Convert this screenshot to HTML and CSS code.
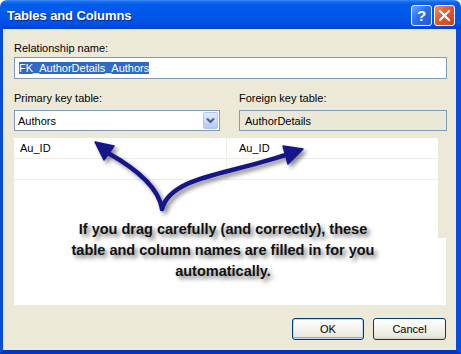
FILE: index.html
```html
<!DOCTYPE html>
<html>
<head>
<meta charset="utf-8">
<link rel="stylesheet" href="styles.css">
</head>
<body>
<div class="window">
  <div class="titlebar">
    <span class="title">Tables and Columns</span>
    <div class="tbtns">
      <span class="tb help">?</span>
      <span class="tb close"><svg width="13" height="13" viewBox="0 0 13 13"><path d="M2 2 L11 11 M11 2 L2 11" stroke="#fff" stroke-width="2.2" stroke-linecap="round"/></svg></span>
    </div>
  </div>
  <div class="frame">
    <div class="lbl">Relationship name:</div>
    <div class="textbox"><span class="sel">FK_AuthorDetails_Authors</span></div>
    <div class="keys">
      <div class="col">
        <div class="lbl">Primary key table:</div>
        <div class="combo"><span class="ctext">Authors</span><span class="dd"><svg width="9" height="7" viewBox="0 0 9 7"><path d="M1 1.5 L4.5 5 L8 1.5" fill="none" stroke="#4D6185" stroke-width="2"/></svg></span></div>
      </div>
      <div class="col">
        <div class="lbl">Foreign key table:</div>
        <div class="ro">AuthorDetails</div>
      </div>
    </div>
    <div class="gridarea">
      <div class="grid">
        <div class="row"><div class="cell c1">Au_ID</div><div class="cell c2">Au_ID</div></div>
        <div class="row"><div class="cell c1"></div><div class="cell c2"></div></div>
      </div>
      <div class="note"></div>
      <svg class="arrows" width="432" height="167" viewBox="14 138 432 167">
        <defs>
          <filter id="sh" x="-20%" y="-20%" width="140%" height="140%">
            <feDropShadow dx="3" dy="3" stdDeviation="2" flood-color="#000" flood-opacity="0.45"/>
          </filter>
        </defs>
        <g filter="url(#sh)" fill="#17178a" stroke="#17178a">
          <path d="M162 209 C159 190 142 172 108 153" fill="none" stroke-width="4.5" stroke-linecap="round"/>
          <path d="M162 209 C168 186 200 178 232 170 S272 159 286 155" fill="none" stroke-width="4.5" stroke-linecap="round"/>
          <polygon points="95,142 114,146 104,160" stroke-width="1.5" stroke-linejoin="round"/>
          <polygon points="303,149 283,146 288,164" stroke-width="1.5" stroke-linejoin="round"/>
        </g>
      </svg>
      <div class="annot">If you drag carefully (and correctly), these<br>table and column names are filled in for you<br>automatically.</div>
    </div>
    <div class="buttons">
      <button class="btn ok">OK</button>
      <button class="btn cancel">Cancel</button>
    </div>
  </div>
</div>
</body>
</html>
```

FILE: styles.css
```css
html, body {
  margin: 0;
  padding: 0;
  width: 461px;
  height: 354px;
  overflow: hidden;
  background: #ffffff;
}

.window {
  width: 461px;
  height: 354px;
  display: flex;
  flex-direction: column;
  font-family: "Liberation Sans", Arial, sans-serif;
  font-size: 11px;
  color: #000;
}

.titlebar {
  height: 29px;
  box-sizing: border-box;
  padding: 1px 6px 0 7px;
  display: flex;
  align-items: center;
  border-radius: 7px 7px 0 0;
  background: linear-gradient(to bottom, #3D8CF5 0px, #1468F0 2px, #005CEC 5px, #0058EA 14px, #0053E4 22px, #0049D8 27px, #003FC4 29px);
}

.title {
  color: #ffffff;
  font-weight: bold;
  font-size: 13px;
  letter-spacing: -0.1px;
  text-shadow: 1px 1px 0 #0A2A8E;
}

.tbtns {
  margin-left: auto;
  display: flex;
  gap: 2px;
}

.tb {
  width: 21px;
  height: 21px;
  box-sizing: border-box;
  border: 1px solid #ffffff;
  border-radius: 3px;
  display: flex;
  align-items: center;
  justify-content: center;
}

.help {
  background: linear-gradient(135deg, #6FA3FB 0%, #2D6EF2 45%, #1D58DE 100%);
  color: #ffffff;
  font-weight: bold;
  font-size: 15px;
}

.close {
  background: linear-gradient(135deg, #F0906E 0%, #E2582F 45%, #C8401C 100%);
}

.frame {
  flex: 1;
  display: flex;
  flex-direction: column;
  background: #ECE9D8;
  border-left: 3px solid #0A4CDC;
  border-right: 5px solid #0A4CDC;
  border-bottom: 4px solid #0535BE;
  padding: 13px 9px 10px 11px;
}

.lbl {
  height: 13px;
  line-height: 13px;
  white-space: nowrap;
}

.textbox {
  margin-top: 2px;
  height: 22px;
  box-sizing: border-box;
  border: 1px solid #7F9DB9;
  background: #ffffff;
  padding: 0 4px;
  display: flex;
  align-items: center;
}

.sel {
  background: #316AC5;
  color: #ffffff;
  line-height: 12px;
}

.keys {
  margin-top: 13px;
  display: grid;
  grid-template-columns: 206px 1fr;
  column-gap: 19px;
}

.combo {
  margin-top: 5px;
  height: 21px;
  box-sizing: border-box;
  border: 1px solid #7F9DB9;
  background: #ffffff;
  display: flex;
  align-items: center;
  padding: 0 1px 0 3px;
}

.ctext {
  flex: 1;
}

.dd {
  width: 15px;
  height: 17px;
  box-sizing: border-box;
  border: 1px solid #B5C8F3;
  border-radius: 2px;
  background: linear-gradient(to bottom, #E2EAFD 0%, #C6D6FA 60%, #B4C9F6 100%);
  display: flex;
  align-items: center;
  justify-content: center;
}

.ro {
  margin-top: 5px;
  height: 21px;
  box-sizing: border-box;
  border: 1px solid #7F9DB9;
  background: #EBE8D7;
  padding-left: 5px;
  display: flex;
  align-items: center;
}

.gridarea {
  margin-top: 7px;
  height: 167px;
  position: relative;
}

.grid {
  width: 424px;
  height: 100px;
  background: #ffffff;
}

.row {
  display: grid;
  grid-template-columns: 213px 1fr;
  height: 20px;
  border-bottom: 1px solid #EEEDE6;
}

.cell {
  line-height: 20px;
}

.c1 {
  padding-left: 6px;
  border-right: 1px solid #EEEDE6;
}

.c2 {
  padding-left: 12px;
}

.note {
  width: 432px;
  height: 67px;
  background: #ffffff;
}

.arrows {
  position: absolute;
  left: 0;
  top: 0;
}

.annot {
  position: absolute;
  left: 0;
  top: 81px;
  width: 418px;
  text-align: center;
  font-weight: bold;
  font-size: 14.5px;
  line-height: 21px;
  color: #111111;
  text-shadow: 3px 3px 4px rgba(0, 0, 0, 0.55);
  white-space: nowrap;
}

.buttons {
  margin-top: 13px;
  display: flex;
  justify-content: flex-end;
  gap: 9px;
  padding-right: 1px;
}

.btn {
  height: 22px;
  box-sizing: border-box;
  border: 1px solid #003C74;
  border-radius: 3px;
  background: linear-gradient(to bottom, #FFFFFF 0%, #F6F5F0 40%, #EAE8E0 85%, #D8D3C8 100%);
  font-family: "Liberation Sans", Arial, sans-serif;
  font-size: 11px;
  color: #000;
  padding: 0;
}

.ok {
  width: 72px;
  box-shadow: inset 0 0 0 1px #BCD4F6, inset 0 -1px 0 1px #89ADE4;
}

.cancel {
  width: 73px;
}
```
